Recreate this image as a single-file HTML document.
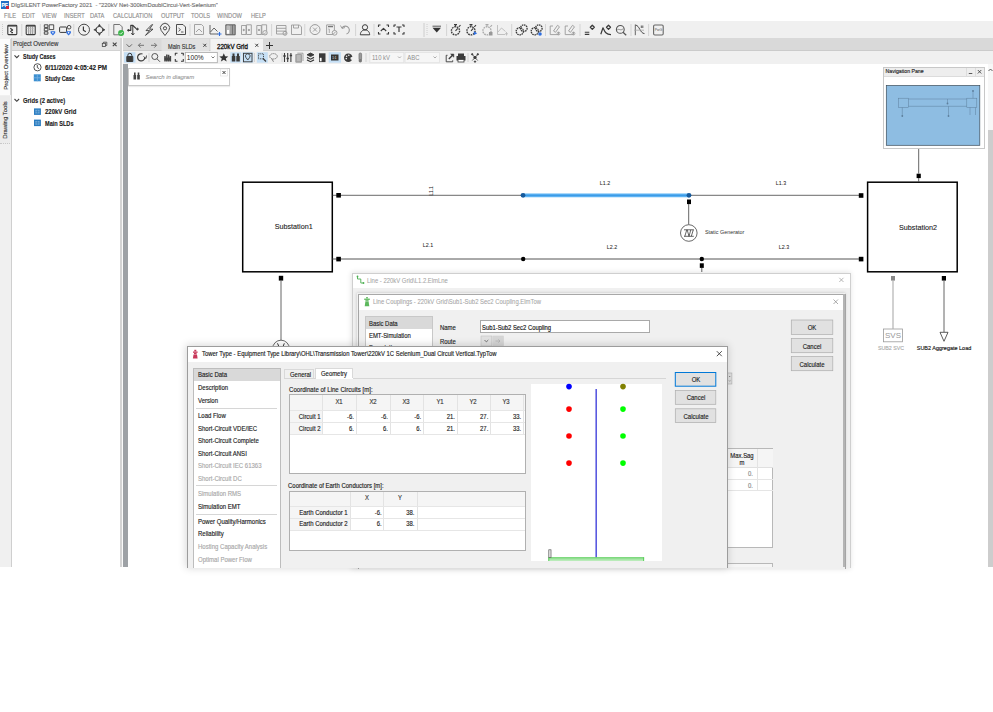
<!DOCTYPE html>
<html><head><meta charset="utf-8">
<style>
html,body{margin:0;padding:0;background:#fff;}
body{width:993px;height:712px;position:relative;overflow:hidden;font-family:"Liberation Sans",sans-serif;color:#000;}
.a{position:absolute;}
.t{position:absolute;white-space:nowrap;font-family:"Liberation Sans",sans-serif;-webkit-text-stroke:0.14px currentColor;}
svg{position:absolute;overflow:visible;}
</style></head><body>

<!-- app frame -->
<div class="a" style="left:0;top:0;width:993px;height:567px;background:#fff;"></div>

<!-- title bar -->
<div class="a" style="left:1px;top:1px;width:8px;height:8px;background:#1f6fc5;"></div>
<div class="t" style="left:1.5px;top:1px;font-size:5px;line-height:8px;color:#fff;font-weight:bold;">PF</div>
<div class="a" style="left:6px;top:6px;width:3px;height:3px;background:#d0263a;"></div>
<div class="t" style="left:11px;top:0.8px;font-size:6.15px;line-height:8px;color:#707070;transform:scaleX(0.945);transform-origin:0 50%;">DIgSILENT PowerFactory 2021&nbsp; - "220kV Net-300kmDoublCircui-Vert-Selenium"</div>

<!-- menu -->
<div class="t" style="top:11.7px;font-size:7.1px;line-height:8px;color:#8e8e8e;left:0;-webkit-text-stroke:0;">
<span class="t" style="transform:scaleX(0.8);transform-origin:0 50%;left:4px">FILE</span>
<span class="t" style="transform:scaleX(0.8);transform-origin:0 50%;left:22px">EDIT</span>
<span class="t" style="transform:scaleX(0.8);transform-origin:0 50%;left:41.7px">VIEW</span>
<span class="t" style="transform:scaleX(0.8);transform-origin:0 50%;left:63.7px">INSERT</span>
<span class="t" style="transform:scaleX(0.8);transform-origin:0 50%;left:90.3px">DATA</span>
<span class="t" style="transform:scaleX(0.8);transform-origin:0 50%;left:113px">CALCULATION</span>
<span class="t" style="transform:scaleX(0.8);transform-origin:0 50%;left:160.5px">OUTPUT</span>
<span class="t" style="transform:scaleX(0.8);transform-origin:0 50%;left:191px">TOOLS</span>
<span class="t" style="transform:scaleX(0.8);transform-origin:0 50%;left:217.3px">WINDOW</span>
<span class="t" style="transform:scaleX(0.8);transform-origin:0 50%;left:250.8px">HELP</span>
</div>

<!-- main toolbar -->
<div class="a" style="left:0;top:21px;width:993px;height:17px;background:#f0f0f0;"></div>

<!-- main toolbar icons -->
<svg style="left:0;top:21px" width="993" height="17">
 <g fill="none" stroke="#3a3a3a" stroke-width="0.9" stroke-linejoin="round">
  <path d="M2.5 3 V15" stroke="#c8c8c8" stroke-dasharray="1 1"/>
  <!-- 1 terminal box -->
  <rect x="7.8" y="4.3" width="9" height="9.3" rx="0.8" stroke-width="1.1"/>
  <path d="M8 4.9 H16.6" stroke-width="1.3"/>
  <path d="M10.3 7.3 L12.6 9 L10.3 10.7 M11.2 11.6 h1.8" stroke-width="1.2"/>
  <path d="M21.8 3 V15" stroke="#d0d0d0"/>
  <!-- 2 table -->
  <rect x="26.2" y="4.3" width="9" height="9.3" rx="0.8" stroke-width="1.1"/>
  <path d="M26.4 4.9 H35" stroke-width="1.3"/>
  <path d="M28.7 5 V13 M30.7 5 V13 M32.7 5 V13" stroke="#777" stroke-width="0.8"/>
  <path d="M26.5 7.5 H35 M26.5 10 H35" stroke="#bbb" stroke-width="0.5"/>
  <path d="M40.3 3 V15" stroke="#d0d0d0"/>
  <!-- 3 four squares -->
  <rect x="44.3" y="3.8" width="3.6" height="2.6" stroke-width="0.9"/><rect x="44.3" y="7.3" width="3.6" height="2.6" stroke-width="0.9"/><rect x="44.3" y="10.8" width="3.6" height="2.4" stroke-width="0.9"/>
  <rect x="49.2" y="3.8" width="4.5" height="4.8" stroke-width="0.9"/>
  <!-- 4 -->
  <rect x="59.6" y="6" width="7" height="5.4" rx="0.6" stroke-width="1"/><circle cx="69.1" cy="6.2" r="1.8" stroke-width="0.9"/>
  <path d="M73.8 3 V15" stroke="#d0d0d0"/>
  <!-- 5 clock -->
  <circle cx="84" cy="8.7" r="5.5" stroke-width="1" stroke="#4a4a4a"/><path d="M83.4 5.6 V9.2 L85.8 10.8" stroke-width="1.2"/>
  <!-- 6 crosshair -->
  <circle cx="99.4" cy="8.8" r="3.4" stroke-width="1"/>
  <path d="M99.4 3.2 L98.3 5.2 H100.5 Z M99.4 14.4 L98.3 12.4 H100.5 Z M93.8 8.8 L95.8 7.7 V9.9 Z M105 8.8 L103 7.7 V9.9 Z" fill="#3a3a3a" stroke-width="0.6"/>
  <path d="M108.8 3 V15" stroke="#d0d0d0"/>
  <!-- 7 page check -->
  <path d="M113.8 3.5 H119.8 L122.2 5.9 V13.8 H113.8 Z" stroke="#666"/>
  <!-- 8 arrows -->
  <path d="M128.6 9.3 H130.8 V4.3 H132.6 L136.2 7.6" stroke-width="1.2"/>
  <path d="M132.8 4.5 V14 M131.3 12.2 L132.8 14 L134.3 12.2" stroke-width="1"/>
  <circle cx="137.4" cy="8.1" r="0.9" fill="#3a3a3a"/><circle cx="128.4" cy="9.3" r="0.8" fill="#3a3a3a"/>
  <!-- 9 lightning -->
  <path d="M151.8 3.6 L146 9.6 H149.6 L145.5 14.4 L153 8.2 H149.5 L152.6 3.6 Z" stroke-width="0.9"/>
  <!-- 10 pin -->
  <path d="M165 14.5 L161.2 9.5 A4.6 4.6 0 1 1 168.8 9.5 Z"/><circle cx="165" cy="7.3" r="1.6"/>
  <!-- 11 terminal page -->
  <path d="M176.5 3.5 H183 L185.5 6 V13.5 H176.5 Z"/><path d="M178.5 7 L180.5 8.7 L178.5 10.4 M181 11 h2.5" stroke-width="0.8"/>
  <path d="M190 3 V15" stroke="#d0d0d0"/>
 </g>
 <path d="M50.6 10.2 H55.2 V12 L52.9 14.4 L50.6 12 Z" fill="#2f6fe0"/><circle cx="52.9" cy="11.7" r="0.8" fill="#fff"/>
 <path d="M66.3 10.2 H70.9 V12 L68.6 14.4 L66.3 12 Z" fill="#2f6fe0"/><circle cx="68.6" cy="11.7" r="0.8" fill="#fff"/>
 <circle cx="121.1" cy="12.1" r="3" fill="#3bb54a"/><path d="M119.7 12.2 l1 1 l2 -2.2" stroke="#fff" stroke-width="0.8" fill="none"/>
 <g fill="none" stroke="#9a9a9a" stroke-width="0.9" stroke-linejoin="round">
  <!-- 13 gray page -->
  <path d="M194.5 3.5 H201.5 L203.5 5.5 V13.5 H194.5 Z"/><path d="M196 11 L199 8 L202 11" />
  <!-- 14 chart -->
  <path d="M210 4 V13 H218" stroke="#555"/><path d="M210.5 11 L214 7 L217.5 10.5" stroke="#555"/>
  <!-- 15 columns -->
  <rect x="225.8" y="3.8" width="9.4" height="10" fill="#a0a0a0" stroke="#555" stroke-width="0.9"/>
  <rect x="226.8" y="4.8" width="2.6" height="8" fill="#fff" stroke="none"/>
  <path d="M227 6 H229.2 M227 8 H229.2" stroke="#555" stroke-width="0.8"/>
  <path d="M232.5 4 V13.5" stroke="#666" stroke-width="0.8"/>
  <!-- 16 two panel -->
  <rect x="241.5" y="4.5" width="4.5" height="9"/><rect x="246.5" y="3.8" width="4.8" height="9.7"/>
  <circle cx="243.7" cy="9" r="0.7" fill="#888"/><circle cx="248.9" cy="9" r="0.7" fill="#888"/>
  <!-- 17 -->
  <rect x="256.8" y="4.5" width="4.5" height="9"/><rect x="261.8" y="3.8" width="4.8" height="9.7"/>
  <circle cx="259" cy="9" r="0.7" fill="#888"/><circle cx="265" cy="11.8" r="2.2" fill="#f0f0f0"/><path d="M264 11.9 l0.8 0.8 l1.3 -1.5" stroke-width="0.7"/>
  <path d="M271.6 3 V15" stroke="#d0d0d0"/>
  <!-- 19 database -->
  <path d="M276.5 4.5 H286 V13 H276.5 Z M276.5 7.3 H286 M276.5 10.1 H286"/><circle cx="285" cy="12.3" r="2"/>
  <!-- 20 save -->
  <path d="M291.5 4 H299.5 L301.5 6 V13.5 H291.5 Z M293.5 4 V7 H298.5 V4"/>
  <path d="M304.8 3 V15" stroke="#d0d0d0"/>
  <!-- 22 circle x -->
  <circle cx="315" cy="8.6" r="5" stroke-width="1"/><path d="M313 6.6 L317 10.6 M317 6.6 L313 10.6"/>
  <!-- 23 form -->
  <rect x="326.6" y="3.9" width="7.8" height="9.6"/><path d="M328 5.6 H333" stroke="#777" stroke-width="1.3"/><path d="M328.3 8 H329.3 V12" stroke-width="0.8"/>
  <circle cx="334.6" cy="11.8" r="2.4" fill="#f0f0f0"/><path d="M333.4 13 L335.8 10.6" stroke-width="0.9"/>
  <!-- 24 undo -->
  <path d="M342 7 A4 4 0 1 1 346.5 13" stroke-width="1.1"/><path d="M340.5 4.5 L342 7.5 L345 6.5"/>
  <path d="M355.6 3 V15" stroke="#d0d0d0"/>
 </g>
 <g fill="none" stroke="#3a3a3a" stroke-width="1" stroke-linejoin="round">
  <!-- 26 person -->
  <circle cx="365" cy="6.3" r="2.6"/><path d="M360.3 13.8 C360.5 10 363 9 365 9 C367 9 369.5 10 369.7 13.8 Z"/>
  <path d="M374 3 V15" stroke="#d0d0d0" stroke-width="0.9"/>
  <!-- 28 bracket ^ -->
  <path d="M378.5 6 V4 H380.5 M386.5 4 H388.5 V6 M378.5 11 V13 H380.5 M386.5 13 H388.5 V11" stroke-width="1.1"/>
  <path d="M380.8 10 L383.5 7.3 L386.2 10" stroke-width="1.1"/>
  <!-- 29 [T] -->
  <path d="M394 6 V4 H396 M402 4 H404 V6 M394 11 V13 H396 M402 13 H404 V11" stroke-width="1.1"/>
  <path d="M396.5 6 H401.5 M399 6 V11" stroke-width="1.2"/>
  <path d="M424 2 V16" stroke="#c8c8c8" stroke-width="0.9"/>
  <path d="M427 3 V15" stroke="#c8c8c8" stroke-dasharray="1 1" stroke-width="0.9"/>
 </g>
 <path d="M432.5 6.8 H441 L436.75 11.5 Z" fill="#333"/>
 <path d="M432.5 5.2 H441" stroke="#333" stroke-width="0.8"/>
 <g fill="none" stroke="#3a3a3a" stroke-width="1.1" stroke-linejoin="round">
  <path d="M446.6 3 V15" stroke="#d0d0d0" stroke-width="0.9"/>
  <circle cx="455.5" cy="9.8" r="4.1" stroke-dasharray="1.7 0.8" stroke-width="1.4"/><path d="M454 3.6 H457 M455.5 3.6 V5.5 M458.8 5.8 L460.5 4.2 M455.5 9.8 L457.8 7.3" stroke-width="1.1"/>
  <circle cx="471" cy="9.8" r="4.1" stroke-dasharray="1.7 0.8" stroke-width="1.4"/><path d="M469.5 3.6 H472.5 M471 3.6 V5.5 M474.3 5.8 L476 4.2 M471 9.8 L473.3 7.3" stroke-width="1.1"/>
  <circle cx="487" cy="9.8" r="4.1" stroke="#aaa" stroke-dasharray="1.7 0.8" stroke-width="1.4"/><path d="M485.5 3.6 H488.5 M487 3.6 V5.5 M490.3 5.8 L492 4.2" stroke="#aaa" stroke-width="1.1"/>
  <path d="M497.5 4 V13.5 H505 M498 11 L501.5 7 L505.5 10.5 M506.5 11 V14.5 M505 12.8 H508" stroke="#bbb" stroke-width="0.9"/>
  <path d="M511.7 3 V15" stroke="#d0d0d0" stroke-width="0.9"/>
  <circle cx="519.8" cy="10.3" r="3.6" stroke-dasharray="1.5 0.7" stroke-width="1.3"/><circle cx="523.8" cy="7.2" r="3.3" stroke-dasharray="1.5 0.7" stroke-width="1.3"/>
  <circle cx="534.8" cy="10.3" r="3.6" stroke-dasharray="1.5 0.7" stroke-width="1.3"/><circle cx="538.8" cy="7.2" r="3.3" stroke-dasharray="1.5 0.7" stroke-width="1.3"/>
  <path d="M545.5 3 V15" stroke="#d0d0d0" stroke-width="0.9"/>
  <path d="M553 5 H550.2 V13.6 H558.5 V11" stroke="#9a9a9a" stroke-width="0.9"/><path d="M553.5 10 L557.5 4.3 L559.5 5.8 L555.5 11.3 Z" stroke="#9a9a9a" stroke-width="0.9"/><circle cx="558.5" cy="12.5" r="1.4" stroke="#9a9a9a" stroke-width="0.8"/>
  <path d="M568 5 H565.2 V13.6 H573.5 V11" stroke="#9a9a9a" stroke-width="0.9"/><path d="M568.5 10 L572.5 4.3 L574.5 5.8 L570.5 11.3 Z" stroke="#9a9a9a" stroke-width="0.9"/><circle cx="573.5" cy="12.5" r="1.4" stroke="#9a9a9a" stroke-width="0.8"/>
  <path d="M580 3 V15" stroke="#d0d0d0" stroke-width="0.9"/>
  <path d="M584.8 11.3 H589.3 M584.8 13.4 H589.3" stroke-width="1.1"/>
  <path d="M592.3 4.3 L594.3 6.3 L592.3 8.3 L590.3 6.3 Z" stroke-width="1.3"/>
  <path d="M600.8 13.2 L603 6.8 C604.5 10 605.5 13.6 611 13.6" stroke-width="1.2"/><path d="M608.5 4.3 L610.5 6.3 L608.5 8.3 L606.5 6.3 Z" stroke-width="1.3"/>
  <circle cx="620.3" cy="8.4" r="3.9" stroke="#555"/><path d="M623 11.2 L626.2 14.3" stroke="#555" stroke-width="1.2"/><path d="M617 9.3 C618.5 6.8 620.5 10.5 623.3 7.6" stroke-width="0.7" stroke="#666"/>
  <path d="M631 3 V15" stroke="#d0d0d0" stroke-width="0.9"/>
  <path d="M635.3 14.2 V3.5" stroke="#666" stroke-width="1"/><path d="M635.6 4.2 C639.5 4.2 640 12.5 644.5 12.6" stroke-width="0.9"/><path d="M634 9.2 H644" stroke="#aaa" stroke-width="0.8"/>
  <path d="M641.3 7 V4.5 M642.8 7 V4.5" stroke-width="0.8"/>
  <path d="M648.6 3 V15" stroke="#d0d0d0" stroke-width="0.9"/>
  <rect x="653.6" y="4" width="9.6" height="10" rx="1.2" stroke="#666" stroke-width="1.1"/>
 </g>
 <path d="M473.8 10.3 L477.2 12.3 L473.8 14.3 Z" fill="#2f6fe0"/>
 <rect x="489" y="11" width="3.5" height="3.5" fill="#999"/>
 <circle cx="540" cy="13" r="1.8" fill="#2f6fe0"/>
 <path d="M219.5 11 V15 M217.5 13 H221.5" stroke="#2f6fe0" stroke-width="1.1"/>
 <text x="654.8" y="10.3" font-size="3.4" font-family="Liberation Sans" fill="#555">PwG</text>
</svg>


<!-- left vertical tabs -->
<div class="a" style="left:0;top:38px;width:11px;height:529px;background:#f0f0f0;"></div>
<div class="a" style="left:0;top:39px;width:10px;height:56px;background:#fcfcfc;border-right:1px solid #d8d8d8;"></div>
<div class="a" style="left:0;top:96px;width:10px;height:47px;background:#ececec;border-bottom:1px dotted #c8c8c8;"></div>
<div class="t" style="left:5.5px;top:67px;font-size:6px;line-height:7px;color:#333;transform:translate(-50%,-50%) rotate(-90deg);">Project Overview</div>
<div class="t" style="left:5.3px;top:120.2px;font-size:6px;line-height:7px;color:#333;transform:translate(-50%,-50%) rotate(-90deg);">Drawing Tools</div>

<!-- project overview panel -->
<div class="a" style="left:11px;top:38px;width:1px;height:529px;background:#cfcfcf;"></div>
<div class="a" style="left:12px;top:38px;width:108px;height:12px;background:#e3e3e3;border-bottom:1px solid #d2d2d2;"></div>
<div class="t" style="left:13.4px;top:39.3px;font-size:6.6px;line-height:10px;color:#333;transform:scaleX(0.91);transform-origin:0 50%;">Project Overview</div>
<div class="a" style="left:12px;top:51px;width:108px;height:516px;background:#fff;"></div>
<div class="a" style="left:120px;top:38px;width:3px;height:529px;background:#fafafa;"></div><div class="a" style="left:120px;top:38px;width:2px;height:529px;background:#d4d4d4;"></div>


<!-- tree -->
<svg style="left:0;top:0" width="993" height="200">
 <g fill="none" stroke="#404040" stroke-width="0.9">
  <path d="M14.5 55.3 L16.8 57.6 L19.1 55.3" stroke-width="1.1"/>
  <path d="M14.5 99 L16.8 101.3 L19.1 99" stroke-width="1.1"/>
  <circle cx="37.5" cy="67.3" r="3.6"/>
  <path d="M37.3 65 V67.6 L39 68.6"/>
 </g>
 <g>
  <rect x="33.8" y="74.3" width="7" height="7" fill="#3b8fd0"/>
  <rect x="34" y="108.4" width="6.9" height="6.5" fill="#2a7cc0"/>
  <rect x="34" y="119.6" width="6.9" height="6.5" fill="#2a7cc0"/>
  <path d="M35.3 109.8 h4.3 v3.8 h-4.3 z M35.3 121 h4.3 v3.8 h-4.3 z" fill="#6fa8d8"/>
  <path d="M37.45 109.8 v3.8 M35.3 111.7 h4.3 M37.45 121 v3.8 M35.3 122.9 h4.3" stroke="#2a7cc0" stroke-width="0.6"/>
  <path d="M37.3 74.3 v7 M33.8 77.8 h7" stroke="#7ab3e2" stroke-width="0.8"/>
 </g>
</svg>
<div class="t" style="left:23.2px;top:52.1px;font-size:6.8px;line-height:9px;font-weight:bold;color:#1a1a1a;-webkit-text-stroke:0.12px #1a1a1a;transform:scaleX(0.80);transform-origin:0 50%;">Study Cases</div>
<div class="t" style="left:44.5px;top:62.9px;font-size:6.8px;line-height:9px;font-weight:bold;color:#1a1a1a;-webkit-text-stroke:0.12px #1a1a1a;transform:scaleX(0.923);transform-origin:0 50%;">6/11/2020 4:05:42 PM</div>
<div class="t" style="left:44.5px;top:73.6px;font-size:6.8px;line-height:9px;font-weight:bold;color:#1a1a1a;-webkit-text-stroke:0.12px #1a1a1a;transform:scaleX(0.807);transform-origin:0 50%;">Study Case</div>
<div class="t" style="left:23.2px;top:96.3px;font-size:6.8px;line-height:9px;font-weight:bold;color:#1a1a1a;-webkit-text-stroke:0.12px #1a1a1a;transform:scaleX(0.857);transform-origin:0 50%;">Grids (2 active)</div>
<div class="t" style="left:44.5px;top:107.2px;font-size:6.8px;line-height:9px;font-weight:bold;color:#1a1a1a;-webkit-text-stroke:0.12px #1a1a1a;transform:scaleX(0.881);transform-origin:0 50%;">220kV Grid</div>
<div class="t" style="left:44.5px;top:118.5px;font-size:6.8px;line-height:9px;font-weight:bold;color:#1a1a1a;-webkit-text-stroke:0.12px #1a1a1a;transform:scaleX(0.82);transform-origin:0 50%;">Main SLDs</div>
<!-- header icons -->
<svg style="left:0;top:0" width="130" height="60">
 <g fill="none" stroke="#444" stroke-width="0.9">
  <rect x="102.3" y="43.3" width="3.2" height="3.2" stroke-width="0.8"/>
  <path d="M103.5 43 v-0.8 h3.3 v3.3 h-1" stroke-width="0.8"/>
  <path d="M112.8 42.6 L116.6 46.2 M116.6 42.6 L112.8 46.2" stroke-width="1.1"/>
 </g>
</svg>


<!-- tab bar -->
<div class="a" style="left:123px;top:37.7px;width:870px;height:13px;background:#d9d9d9;border-bottom:1px solid #cbcbcb;box-sizing:border-box;"></div>

<!-- tabs -->
<svg style="left:0;top:0" width="300" height="60">
 <g fill="none" stroke="#666" stroke-width="0.9">
  <path d="M126.6 44.3 L129.3 47 L132 44.3" stroke-width="1"/>
  <path d="M144 45.3 H138.5 M140.7 43 L138.4 45.3 L140.7 47.6"/>
  <path d="M151 45.3 H156.5 M154.3 43 L156.6 45.3 L154.3 47.6"/>
 </g>
 <rect x="161.5" y="39" width="47.5" height="12" fill="#e1e1e1"/>
 <rect x="210.5" y="39" width="52.5" height="12" fill="#f3f3f3"/>
 <g fill="none" stroke="#333" stroke-width="0.9">
  <path d="M203.3 43.8 L206.3 46.8 M206.3 43.8 L203.3 46.8"/>
  <path d="M255.3 43.8 L258.3 46.8 M258.3 43.8 L255.3 46.8"/>
  <path d="M269.5 42 V49 M266 45.5 H273" stroke-width="1"/>
 </g>
</svg>
<div class="t" style="left:168.4px;top:41.6px;font-size:6.5px;line-height:9px;color:#333;transform:scaleX(0.86);transform-origin:0 50%;">Main SLDs</div>
<div class="t" style="left:216.8px;top:41.6px;font-size:6.5px;line-height:9px;font-weight:normal;-webkit-text-stroke:0.3px #111;color:#111;transform:scaleX(0.95);transform-origin:0 50%;">220kV Grid</div>


<!-- diagram toolbar -->
<div class="a" style="left:123px;top:51px;width:870px;height:13.4px;background:#f0f0f0;"></div>

<!-- diagram toolbar -->
<svg style="left:0;top:51px" width="993" height="13">
 <rect x="124" y="1.2" width="11.5" height="10.5" fill="#c5dff5"/>
 <rect x="230.3" y="1.2" width="11" height="10.5" fill="#c5dff5"/>
 <rect x="242.3" y="1.2" width="11" height="10.5" fill="#c5dff5"/>
 <rect x="256.8" y="1.2" width="11" height="10.5" fill="#c5dff5"/>
 <rect x="328.7" y="1.2" width="12.3" height="10.5" fill="#c5dff5"/>
 <g fill="none" stroke="#3a3a3a" stroke-width="1" stroke-linejoin="round">
  <!-- lock -->
  <path d="M127.8 5.5 V4.3 A2 2 0 0 1 131.8 4.3 V5.5"/>
  <rect x="126.8" y="5.5" width="6" height="5" fill="#3a3a3a"/>
  <!-- refresh -->
  <path d="M144.8 6.5 A3.6 3.6 0 1 1 142.5 3" stroke-width="1.2"/><path d="M143.5 5.5 L146 7.5 L146.5 4.5" stroke-width="0.9"/>
  <path d="M149 2 V11" stroke="#d0d0d0" stroke-width="0.9"/>
  <!-- magnifier -->
  <circle cx="154.8" cy="5.5" r="3" stroke="#555"/><path d="M157 7.8 L160 10.8" stroke="#555"/>
  <!-- hand -->
  <path d="M165 10.5 V5 M166.8 10.5 V3.5 M168.6 10.5 V3.8 M170.4 10.5 V5" stroke-width="1.5" stroke="#444"/>
  <path d="M164.5 8 H171" stroke-width="3" stroke="#444"/>
  <!-- fullscreen -->
  <path d="M175.3 4.5 V2.3 H177.5 M181 2.3 H183.3 V4.5 M175.3 8 V10.3 H177.5 M181 10.3 H183.3 V8" stroke-width="1.1"/>
 </g>
 <rect x="185.3" y="1.5" width="32" height="10.2" fill="#fff" stroke="#a8a8a8" stroke-width="0.8"/>
 <path d="M211.5 5.5 L213 7 L214.5 5.5" fill="none" stroke="#555" stroke-width="0.8"/>
 <text x="186.8" y="9.3" font-size="6.6" font-family="Liberation Sans" fill="#222">100%</text>
 <path d="M223.8 2.2 L225.1 5.3 L228.3 5.4 L225.8 7.4 L226.7 10.5 L223.8 8.7 L220.9 10.5 L221.8 7.4 L219.3 5.4 L222.5 5.3 Z" fill="#333"/>
 <g fill="#3a3a3a">
  <!-- binoculars -->
  <rect x="231.8" y="5" width="3.5" height="5.5"/><rect x="236.3" y="5" width="3.5" height="5.5"/>
  <rect x="232.5" y="2.5" width="2" height="3"/><rect x="237" y="2.5" width="2" height="3"/>
 </g>
 <g fill="none" stroke="#3a3a3a" stroke-width="0.9">
  <rect x="243.5" y="2.3" width="8.5" height="8.5"/>
  <path d="M247.75 9 L245.8 6.3 A2.3 2.3 0 1 1 249.7 6.3 Z"/>
  <path d="M254.5 2 V11" stroke="#d0d0d0"/>
  <rect x="258.5" y="2.8" width="5" height="5" stroke-dasharray="1 0.8"/><path d="M263 7.5 L266 10.5" stroke-width="1.3"/>
  <ellipse cx="273.5" cy="5.3" rx="3.8" ry="2.7" stroke="#777" stroke-dasharray="1.5 0.5"/><path d="M271.8 7.8 L273.5 10.8" stroke="#777"/>
  <path d="M282 2 V11" stroke="#d0d0d0"/>
  <path d="M284.5 2 V11 M287.7 2 V11 M290.9 2 V11" stroke-width="1.1"/>
  <path d="M283.3 5 H285.7 M286.5 7.5 H288.9 M289.7 4.5 H292.1" stroke-width="1.3"/>
  <path d="M295.8 3.5 H301.5 V11.2 H295.8 Z" fill="#aaa" stroke="#999"/><path d="M297.3 2.2 H303 V10" stroke="#999"/><path d="M297 5 H300.5 M297 7 H300.5 M297 9 H300.5" stroke="#ddd" stroke-width="0.6"/>
  <path d="M307 3.8 L310.5 2 L314 3.8 L310.5 5.6 Z" fill="#3a3a3a"/><path d="M307 6.4 L310.5 8.2 L314 6.4 M307 8.9 L310.5 10.7 L314 8.9" stroke-width="1.2"/>
 </g>
 <rect x="319" y="2.3" width="6.5" height="8.8" fill="#3a3a3a"/>
 <rect x="319.8" y="6.8" width="1.8" height="3.5" fill="#fff"/>
 <rect x="331" y="3.5" width="7.5" height="6" fill="#333"/>
 <text x="332.3" y="8" font-size="3" font-family="Liberation Sans" fill="#fff">1:1</text>
 <circle cx="348.3" cy="6.7" r="4.3" fill="#3a3a3a"/>
 <circle cx="346.6" cy="5.3" r="0.8" fill="#f0f0f0"/><circle cx="348.8" cy="4.3" r="0.8" fill="#f0f0f0"/><circle cx="346.3" cy="7.6" r="0.8" fill="#f0f0f0"/><path d="M350.5 6.5 L353 5.5 L353 9.5 L350.5 8.3 Z" fill="#f0f0f0"/>
 <rect x="359" y="2" width="2.6" height="7.2" rx="1.2" fill="#999" stroke="#777" stroke-width="0.8"/><circle cx="360.3" cy="9.7" r="1.7" fill="#777"/>
 <path d="M366 2 V11" stroke="#d0d0d0" stroke-width="0.9"/>
 <rect x="369.8" y="1.5" width="34" height="10.2" fill="#f6f6f6" stroke="#e2e2e2" stroke-width="0.8"/>
 <text x="372" y="9.2" font-size="6.6" font-family="Liberation Sans" fill="#8e8e8e" transform="translate(372 0) scale(0.9 1) translate(-372 0)">110 kV</text>
 <path d="M398 5.5 L399.5 7 L401 5.5" fill="none" stroke="#999" stroke-width="0.8"/>
 <rect x="405" y="1.5" width="34.5" height="10.2" fill="#f6f6f6" stroke="#e2e2e2" stroke-width="0.8"/>
 <text x="407.3" y="9.2" font-size="6.6" font-family="Liberation Sans" fill="#8e8e8e" transform="translate(407 0) scale(0.9 1) translate(-407 0)">ABC</text>
 <path d="M433.5 5.5 L435 7 L436.5 5.5" fill="none" stroke="#999" stroke-width="0.8"/>
 <g fill="none" stroke="#3a3a3a" stroke-width="1">
  <path d="M447.5 4.3 H446.2 V10.8 H452.7 V9.3" stroke-width="0.9"/><path d="M448.8 8 L452.5 4.3" stroke-width="1.3"/><path d="M450.6 3 H453.8 V6.2 Z" fill="#3a3a3a" stroke-width="0.5"/>
 </g>
 <rect x="456.5" y="5" width="9" height="4.5" fill="#3a3a3a"/><rect x="458" y="2.5" width="6" height="2.5" fill="#3a3a3a"/><rect x="458" y="8.5" width="6" height="2.5" fill="#fff" stroke="#3a3a3a" stroke-width="0.8"/>
 <path d="M468 2 V11" stroke="#d0d0d0" stroke-width="0.9"/>
 <g stroke="#3a3a3a" stroke-width="0.9" fill="#3a3a3a">
  <path d="M475 6.5 L472.3 3.5 M475 6.5 L477.7 3.5 M475 6.5 L472.3 9.5 M475 6.5 L477.7 9.5" stroke-width="0.8"/>
  <circle cx="475" cy="6.5" r="1.2"/><circle cx="472.2" cy="3.3" r="0.7"/><circle cx="477.8" cy="3.3" r="0.7"/><circle cx="475" cy="10.6" r="0.7"/>
 </g>
</svg>
<!-- search box -->
<div class="a" style="left:128px;top:68px;width:100px;height:15.5px;background:#fff;border:1px solid #c9c9c9;box-shadow:0 1px 1px rgba(0,0,0,0.08);"></div>
<svg style="left:0;top:0" width="260" height="100">
 <g fill="#444"><rect x="133.5" y="75" width="2.6" height="4.5"/><rect x="137.2" y="75" width="2.6" height="4.5"/><rect x="134" y="72.5" width="1.6" height="3"/><rect x="137.7" y="72.5" width="1.6" height="3"/></g>
 <rect x="220.5" y="69" width="7" height="7" fill="#fff" stroke="#ddd" stroke-width="0.6"/>
 <path d="M222.5 71 L225.5 74 M225.5 71 L222.5 74" stroke="#333" stroke-width="0.9"/>
</svg>
<div class="t" style="left:145.5px;top:72.8px;font-size:6px;line-height:9px;color:#a0a0a0;font-style:italic;">Search in diagram</div>


<!-- canvas -->
<div class="a" style="left:123px;top:64px;width:5px;height:503px;background:#9ea2a6;"></div>
<div class="a" style="left:988px;top:64px;width:5px;height:503px;background:#f7f7f7;"></div>
<div class="a" style="left:988px;top:130px;width:5px;height:437px;background:#cdcdcd;"></div>


<!-- diagram -->
<svg style="left:0;top:0" width="993" height="567">
 <g stroke="#000" fill="none">
  <rect x="242.7" y="182.2" width="89.6" height="89.6" stroke-width="1.5"/>
  <rect x="867.6" y="182.2" width="89.6" height="89.6" stroke-width="1.5"/>
 </g>
 <!-- top line -->
 <path d="M332.5 195.3 H523 M689 195.3 H860" stroke="#444" stroke-width="0.8"/>
 <path d="M523 195.3 H689" stroke="#5db3f3" stroke-width="3.8"/>
 <path d="M523 195.3 H689" stroke="#3d9be6" stroke-width="1.2"/>
 <circle cx="523" cy="195.3" r="2.4" fill="#165a9c"/>
 <circle cx="689" cy="195.3" r="2.4" fill="#165a9c"/>
 <!-- bottom line -->
 <path d="M332.5 259 H860" stroke="#555" stroke-width="1"/>
 <circle cx="523.2" cy="259" r="2.2" fill="#000"/>
 <circle cx="701.8" cy="259" r="2.2" fill="#000"/>
 <!-- nodes -->
 <g fill="#000">
  <rect x="336.3" y="193" width="4.6" height="4.6"/>
  <rect x="336.3" y="256.8" width="4.6" height="4.6"/>
  <rect x="858.8" y="193.2" width="4.6" height="4.6"/>
  <rect x="858.8" y="256.8" width="4.6" height="4.6"/>
  <rect x="687" y="199.5" width="4" height="4.6"/>
  <rect x="699.8" y="263.3" width="4" height="4.6"/>
  <rect x="278.8" y="275.8" width="4.4" height="4.8"/>
  <rect x="916.6" y="173.7" width="4.2" height="4.4"/>
  <rect x="941.8" y="276" width="4.2" height="4.6"/>
 </g>
 <rect x="891" y="276" width="4" height="4.6" fill="#888"/>
 <!-- stubs -->
 <path d="M688.7 204 V224.5 M918.7 148 V173.7 M918.7 178 V182 M281 280.6 V340.2 M701.8 268 V272 M944 280.6 V332" stroke="#555" stroke-width="0.9"/>
 <path d="M893 280.6 V328.8" stroke="#999" stroke-width="0.9"/>
 <!-- static gen -->
 <circle cx="688.8" cy="233" r="8.3" fill="#fff" stroke="#444" stroke-width="0.8"/>
 <path d="M684 229.8 H693.8 M684 236.3 H693.8 M686.8 229.8 L684.8 236.3 M687.2 229.8 L689 236.3 L690.8 229.8 M693.3 229.8 L691.3 236.3" stroke="#333" stroke-width="0.75" fill="none"/>
 <!-- motor circle -->
 <circle cx="281" cy="348.5" r="8.3" fill="#fff" stroke="#444" stroke-width="0.8"/>
 <path d="M277.5 343.3 L279.5 348 M284.3 343.3 L282.5 348" stroke="#222" stroke-width="0.9" fill="none"/>
 <!-- SVS -->
 <rect x="883.5" y="329" width="19" height="12.8" fill="#fff" stroke="#999" stroke-width="0.8"/>
 <text x="893" y="338.3" font-size="8" font-family="Liberation Sans" fill="#999" text-anchor="middle">SVS</text>
 <!-- load -->
 <path d="M940 332.3 H948 L944 341.3 Z" fill="#fff" stroke="#333" stroke-width="0.8"/>
</svg>
<div class="t" style="left:293.7px;top:226.3px;font-size:7.2px;line-height:9px;color:#222;-webkit-text-stroke:0.1px #222;transform:translate(-50%,-50%);">Substation1</div>
<div class="t" style="left:918px;top:226.6px;font-size:7.2px;line-height:9px;color:#222;-webkit-text-stroke:0.1px #222;transform:translate(-50%,-50%);">Substation2</div>
<div class="t" style="left:430.8px;top:190.8px;font-size:5.5px;line-height:7px;color:#222;-webkit-text-stroke:0.05px #222;transform:translate(-50%,-50%) rotate(-90deg) scaleX(0.9);">L1.1</div>
<div class="t" style="left:605.4px;top:182.7px;font-size:5.9px;line-height:7px;color:#222;-webkit-text-stroke:0.05px #222;transform:translate(-50%,-50%) scaleX(0.9);">L1.2</div>
<div class="t" style="left:781px;top:182.5px;font-size:5.9px;line-height:7px;color:#222;-webkit-text-stroke:0.05px #222;transform:translate(-50%,-50%) scaleX(0.9);">L1.3</div>
<div class="t" style="left:427.7px;top:245.2px;font-size:5.9px;line-height:7px;color:#222;-webkit-text-stroke:0.05px #222;transform:translate(-50%,-50%) scaleX(0.9);">L2.1</div>
<div class="t" style="left:612px;top:247px;font-size:5.9px;line-height:7px;color:#222;-webkit-text-stroke:0.05px #222;transform:translate(-50%,-50%) scaleX(0.9);">L2.2</div>
<div class="t" style="left:784.3px;top:246.7px;font-size:5.9px;line-height:7px;color:#222;-webkit-text-stroke:0.05px #222;transform:translate(-50%,-50%) scaleX(0.9);">L2.3</div>
<div class="t" style="left:705px;top:228.5px;font-size:6px;line-height:7px;color:#333;-webkit-text-stroke:0;transform:scaleX(0.9);transform-origin:0 50%;">Static Generator</div>
<div class="t" style="left:891.4px;top:348.4px;font-size:5.9px;line-height:7px;color:#aaa;transform:translate(-50%,-50%) scaleX(0.9);">SUB2 SVC</div>
<div class="t" style="left:943.5px;top:348.4px;font-size:5.9px;line-height:7px;color:#111;transform:translate(-50%,-50%) scaleX(0.93);">SUB2 Aggregate Load</div>

<!-- navigation pane -->
<div class="a" style="left:883px;top:67px;width:100px;height:80px;background:#fff;border:1px solid #c8c8c8;"></div>
<div class="a" style="left:884px;top:68px;width:100px;height:7.5px;background:#eeeeee;border-bottom:1px solid #dcdcdc;"></div>
<div class="t" style="left:885.5px;top:68px;font-size:5.2px;line-height:7px;color:#222;">Navigation Pane</div>
<svg style="left:0;top:0" width="993" height="160">
 <path d="M966.5 68 V76 M975.5 68 V76" stroke="#d6d6d6" stroke-width="0.7"/>
 <path d="M968.8 73.5 H972.3" stroke="#333" stroke-width="0.8"/>
 <path d="M977.8 70 L981.3 73.5 M981.3 70 L977.8 73.5" stroke="#333" stroke-width="0.8"/>
 <rect x="886.3" y="85.5" width="93.5" height="59.8" fill="#8ebde2" stroke="#3a4a58" stroke-width="0.7"/>
 <g stroke="#5d7f9c" stroke-width="0.5" fill="none">
  <rect x="898.5" y="98.2" width="10" height="9.3"/>
  <rect x="966.8" y="98.2" width="10" height="9.3"/>
  <path d="M908.5 99 H966.8 M908.5 106.3 H966.8"/>
  <path d="M902.3 107.5 V116 M948.5 106.3 V116 M970 107.5 V115 M975.5 107.5 V115 M973 98.2 V92 M947.5 99 V103"/>
 </g>
 <g fill="#5d7f9c"><circle cx="902.3" cy="116" r="0.9"/><circle cx="948.5" cy="116" r="0.9"/><circle cx="973" cy="91" r="1"/><circle cx="947.5" cy="103.5" r="0.9"/></g>
 <!-- scrollbar arrow -->
 <path d="M988.5 71 L990.5 69 L992.5 71" stroke="#333" stroke-width="0.8" fill="none"/>
</svg>


<!-- ===== Line dialog (back) ===== -->
<div class="a" style="left:352px;top:272.5px;width:498px;height:295px;box-shadow:0 0 5px 1px rgba(0,0,0,0.1);"></div>
<div class="a" style="left:352px;top:272.5px;width:497px;height:294.5px;background:#f0f0f0;border:1px solid #cfcfcf;border-bottom:none;"></div>
<div class="a" style="left:353px;top:273.5px;width:497px;height:14.3px;background:#fff;"></div>
<svg style="left:0;top:0" width="993" height="567">
 <path d="M357.5 276.5 V279 H360.8 V283 H363.5" stroke="#4caf50" stroke-width="0.9" fill="none"/>
 <circle cx="357.5" cy="276.5" r="0.9" fill="#4caf50"/><circle cx="363.5" cy="283" r="0.9" fill="#4caf50"/>
 <path d="M839.3 277.8 L843.5 282 M843.5 277.8 L839.3 282" stroke="#999" stroke-width="0.7"/>
</svg>
<div class="t" style="transform:scaleX(0.93);transform-origin:0 50%;left:366.5px;top:277px;font-size:6.37px;line-height:8px;color:#a3a3a3;-webkit-text-stroke:0.05px #a3a3a3;">Line - 220kV Grid\L1.2.ElmLne</div>

<!-- ===== Line Couplings dialog ===== -->
<div class="a" style="left:357px;top:293px;width:488px;height:274px;box-shadow:0 0 3px rgba(0,0,0,0.2);"></div>
<div class="a" style="left:357.5px;top:293.5px;width:486px;height:273.5px;background:#f0f0f0;border:1px solid #a5a5a5;border-top:2px solid #a8a8a8;border-bottom:none;"></div>
<div class="a" style="left:358.5px;top:294.5px;width:486px;height:15.5px;background:#fff;"></div>
<svg style="left:0;top:0" width="993" height="567">
 <g fill="#5cb85c"><rect x="366.2" y="297" width="1.6" height="1.5"/><rect x="364.2" y="298.6" width="5.6" height="1.3"/><rect x="365.4" y="300.2" width="3.2" height="1.2"/><path d="M365.4 301.5 H368.6 L369.3 306.2 H364.7 Z"/></g>
 <path d="M833.5 299.5 L838 304 M838 299.5 L833.5 304" stroke="#888" stroke-width="0.7"/>
</svg>
<div class="t" style="transform:scaleX(0.93);transform-origin:0 50%;left:372.9px;top:298.3px;font-size:6.38px;line-height:8px;color:#a3a3a3;-webkit-text-stroke:0.05px #a3a3a3;">Line Couplings - 220kV Grid\Sub1-Sub2 Sec2 Coupling.ElmTow</div>
<!-- list -->
<div class="a" style="left:364.5px;top:315.5px;width:66.5px;height:251.5px;background:#fff;border:1px solid #c8c8c8;border-bottom:none;"></div>
<div class="a" style="left:365.5px;top:316.5px;width:66.5px;height:12.5px;background:#d9d9d9;"></div>
<div class="t" style="transform:scaleX(0.93);transform-origin:0 50%;left:369px;top:318.5px;font-size:6.37px;line-height:9px;color:#222;">Basic Data</div>
<div class="t" style="transform:scaleX(0.93);transform-origin:0 50%;left:369px;top:330.8px;font-size:6.37px;line-height:9px;color:#222;">EMT-Simulation</div>
<div class="t" style="transform:scaleX(0.93);transform-origin:0 50%;left:369px;top:343px;font-size:6.37px;line-height:9px;color:#222;">Description</div>
<div class="t" style="transform:scaleX(0.93);transform-origin:0 50%;left:440px;top:322.5px;font-size:6.37px;line-height:9px;color:#222;">Name</div>
<div class="t" style="transform:scaleX(0.93);transform-origin:0 50%;left:440px;top:337px;font-size:6.37px;line-height:9px;color:#222;">Route</div>
<div class="a" style="left:480px;top:320.3px;width:168px;height:10.6px;background:#fff;border:1px solid #a9a9a9;"></div>
<div class="t" style="transform:scaleX(0.93);transform-origin:0 50%;left:481.8px;top:322.5px;font-size:6.31px;line-height:9px;color:#111;">Sub1-Sub2 Sec2 Coupling</div>
<svg style="left:0;top:0" width="993" height="567">
 <rect x="481" y="336" width="10.8" height="10" fill="#e1e1e1" stroke="#c0c0c0" stroke-width="0.6"/>
 <rect x="492.8" y="336" width="10.5" height="10" fill="#d6d6d6" stroke="#cfcfcf" stroke-width="0.6"/>
 <path d="M484.5 340 L486.4 341.9 L488.3 340" stroke="#444" stroke-width="0.7" fill="none"/>
 <path d="M495.5 341 H500 M498.3 339.3 L500 341 L498.3 342.7" stroke="#aaa" stroke-width="0.6" fill="none"/>
 <!-- buttons -->
 <rect x="791.3" y="320" width="41.5" height="14.4" fill="#e1e1e1" stroke="#adadad" stroke-width="0.7"/>
 <rect x="791.3" y="338.4" width="41.5" height="14.3" fill="#e1e1e1" stroke="#adadad" stroke-width="0.7"/>
 <rect x="791.3" y="356.6" width="41.5" height="14.1" fill="#e1e1e1" stroke="#adadad" stroke-width="0.7"/>
 <rect x="727.4" y="373" width="4.5" height="11" fill="#e1e1e1" stroke="#adadad" stroke-width="0.6"/>
 <path d="M729 377 l0.7 -0.7 l0.7 0.7 M729 380.5 l0.7 0.7 l0.7 -0.7" stroke="#333" stroke-width="0.5" fill="none"/>
</svg>
<div class="t" style="left:812px;top:327.2px;font-size:6.48px;line-height:9px;color:#222;transform:translate(-50%,-50%) scaleX(0.93);">OK</div>
<div class="t" style="left:812px;top:345.6px;font-size:6.48px;line-height:9px;color:#222;transform:translate(-50%,-50%) scaleX(0.93);">Cancel</div>
<div class="t" style="left:812px;top:363.7px;font-size:6.48px;line-height:9px;color:#222;transform:translate(-50%,-50%) scaleX(0.93);">Calculate</div>
<!-- max sag table -->
<div class="a" style="left:700px;top:448.2px;width:73px;height:100px;background:#fff;border:1px solid #b8b8b8;box-sizing:border-box;"></div>
<div class="a" style="left:701px;top:449px;width:71.5px;height:18px;background:#f5f5f5;border-bottom:1px solid #e0e0e0;"></div>
<div class="a" style="left:756.5px;top:449px;width:1px;height:41.3px;background:#e3e3e3;"></div>
<div class="a" style="left:701px;top:478.8px;width:71.5px;height:1px;background:#e5e5e5;"></div>
<div class="a" style="left:701px;top:490.3px;width:71.5px;height:1px;background:#e5e5e5;"></div>
<div class="t" style="left:741.5px;top:451.5px;font-size:6.37px;line-height:7px;color:#222;transform:translateX(-50%) scaleX(0.93);text-align:center;">Max.Sag<br>m</div>
<div class="t" style="transform:scaleX(0.93);transform-origin:0 50%;left:748px;top:469px;font-size:6.37px;line-height:9px;color:#888;">0.</div>
<div class="t" style="transform:scaleX(0.93);transform-origin:0 50%;left:748px;top:480.5px;font-size:6.37px;line-height:9px;color:#888;">0.</div>
<div class="a" style="left:700px;top:563.4px;width:73px;height:4px;background:#f5f5f5;border:1px solid #b8b8b8;border-bottom:none;box-sizing:border-box;"></div>
<div class="a" style="left:843px;top:294px;width:2px;height:273px;background:#b4b4b4;"></div>

<!-- ===== Tower Type dialog (front) ===== -->
<div class="a" style="left:186.5px;top:346.3px;width:540.5px;height:221px;box-shadow:0 0 8px 1px rgba(0,0,0,0.16);"></div>
<div class="a" style="left:186.5px;top:346.3px;width:539.5px;height:220.7px;background:#f0f0f0;border:1px solid #9c9c9c;border-bottom:none;"></div>
<div class="a" style="left:187.5px;top:347.3px;width:539.5px;height:14.7px;background:#fff;"></div>
<svg style="left:0;top:0" width="993" height="567">
 <g fill="#c8385a"><rect x="194.3" y="349.8" width="2" height="1.6"/><rect x="193" y="351.5" width="4.6" height="1.3"/><rect x="194" y="353" width="2.6" height="1.3"/><path d="M193.5 354.5 H197 L197.6 358.5 H192.9 Z"/></g>
 <path d="M716.8 351.2 L721.8 356.2 M721.8 351.2 L716.8 356.2" stroke="#222" stroke-width="0.8"/>
</svg>
<div class="t" style="transform:scaleX(0.93);transform-origin:0 50%;left:202.4px;top:350.3px;font-size:6.34px;line-height:8px;color:#1a1a1a;">Tower Type - Equipment Type Library\OHL\Transmission Tower\220kV 1C Selenium_Dual Circuit Vertical.TypTow</div>
<!-- left list -->
<div class="a" style="left:193.3px;top:367.5px;width:85.5px;height:199.5px;background:#fff;border:1px solid #bdbdbd;border-bottom:none;"></div>
<div class="a" style="left:194.3px;top:368.5px;width:85.5px;height:12px;background:#d9d9d9;"></div>
<div class="t" style="transform:scaleX(0.93);transform-origin:0 50%;left:198.2px;top:370.1px;font-size:6.48px;line-height:9px;color:#222;">Basic Data</div>
<div class="t" style="transform:scaleX(0.93);transform-origin:0 50%;left:198.2px;top:382.9px;font-size:6.48px;line-height:9px;color:#222;">Description</div>
<div class="t" style="transform:scaleX(0.93);transform-origin:0 50%;left:198.2px;top:395.5px;font-size:6.48px;line-height:9px;color:#222;">Version</div>
<div class="a" style="left:195.7px;top:407.5px;width:81.6px;height:1px;background:#d6d6d6;"></div>
<div class="t" style="transform:scaleX(0.93);transform-origin:0 50%;left:198.2px;top:410.9px;font-size:6.48px;line-height:9px;color:#222;">Load Flow</div>
<div class="t" style="transform:scaleX(0.93);transform-origin:0 50%;left:198.2px;top:423.5px;font-size:6.48px;line-height:9px;color:#222;">Short-Circuit VDE/IEC</div>
<div class="t" style="transform:scaleX(0.93);transform-origin:0 50%;left:198.2px;top:436.2px;font-size:6.48px;line-height:9px;color:#222;">Short-Circuit Complete</div>
<div class="t" style="transform:scaleX(0.93);transform-origin:0 50%;left:198.2px;top:448.7px;font-size:6.48px;line-height:9px;color:#222;">Short-Circuit ANSI</div>
<div class="t" style="transform:scaleX(0.93);transform-origin:0 50%;left:198.2px;top:461.1px;font-size:6.48px;line-height:9px;color:#a8a8a8;">Short-Circuit IEC 61363</div>
<div class="t" style="transform:scaleX(0.93);transform-origin:0 50%;left:198.2px;top:473.6px;font-size:6.48px;line-height:9px;color:#a8a8a8;">Short-Circuit DC</div>
<div class="a" style="left:195.7px;top:485.2px;width:81.6px;height:1px;background:#d6d6d6;"></div>
<div class="t" style="transform:scaleX(0.93);transform-origin:0 50%;left:198.2px;top:489.1px;font-size:6.48px;line-height:9px;color:#a8a8a8;">Simulation RMS</div>
<div class="t" style="transform:scaleX(0.93);transform-origin:0 50%;left:198.2px;top:501.8px;font-size:6.48px;line-height:9px;color:#222;">Simulation EMT</div>
<div class="a" style="left:195.7px;top:514.0px;width:81.6px;height:1px;background:#d6d6d6;"></div>
<div class="t" style="transform:scaleX(0.93);transform-origin:0 50%;left:198.2px;top:516.7px;font-size:6.48px;line-height:9px;color:#222;">Power Quality/Harmonics</div>
<div class="t" style="transform:scaleX(0.93);transform-origin:0 50%;left:198.2px;top:529.3px;font-size:6.48px;line-height:9px;color:#222;">Reliability</div>
<div class="t" style="transform:scaleX(0.93);transform-origin:0 50%;left:198.2px;top:542.0px;font-size:6.48px;line-height:9px;color:#a8a8a8;">Hosting Capacity Analysis</div>
<div class="t" style="transform:scaleX(0.93);transform-origin:0 50%;left:198.2px;top:554.6px;font-size:6.48px;line-height:9px;color:#a8a8a8;">Optimal Power Flow</div>

<!-- tabs -->
<div class="a" style="left:284.2px;top:369px;width:30px;height:9.5px;background:#f0f0f0;border:1px solid #d9d9d9;border-bottom:none;box-sizing:border-box;"></div>
<div class="a" style="left:315px;top:367.8px;width:38px;height:11px;background:#fff;border:1px solid #d9d9d9;border-bottom:none;box-sizing:border-box;"></div>
<div class="a" style="left:284.2px;top:378.3px;width:382px;height:1px;background:#d6d6d6;"></div>
<div class="a" style="left:315.5px;top:378px;width:37px;height:1.3px;background:#fff;"></div>
<div class="t" style="transform:scaleX(0.93);transform-origin:0 50%;left:290px;top:369.5px;font-size:6.37px;line-height:9px;color:#222;">General</div>
<div class="t" style="transform:scaleX(0.93);transform-origin:0 50%;left:320.8px;top:368.7px;font-size:6.37px;line-height:9px;color:#222;">Geometry</div>
<div class="t" style="transform:scaleX(0.93);transform-origin:0 50%;left:288.5px;top:385.3px;font-size:6.56px;line-height:9px;color:#222;">Coordinate of Line Circuits [m]:</div>
<div class="a" style="left:288.5px;top:394.4px;width:237.3px;height:80px;background:#fff;border:1px solid #b0b0b0;box-sizing:border-box;"></div>
<div class="a" style="left:289.5px;top:395.4px;width:235.3px;height:15px;background:#f5f5f5;"></div>
<div class="a" style="left:289.5px;top:410.3px;width:33px;height:23.3px;background:#f5f5f5;"></div>
<div class="a" style="left:322.3px;top:395.4px;width:1px;height:38.2px;background:#e3e3e3;"></div>
<div class="a" style="left:356.0px;top:395.4px;width:1px;height:38.2px;background:#e3e3e3;"></div>
<div class="a" style="left:389.7px;top:395.4px;width:1px;height:38.2px;background:#e3e3e3;"></div>
<div class="a" style="left:422.7px;top:395.4px;width:1px;height:38.2px;background:#e3e3e3;"></div>
<div class="a" style="left:456.5px;top:395.4px;width:1px;height:38.2px;background:#e3e3e3;"></div>
<div class="a" style="left:489.6px;top:395.4px;width:1px;height:38.2px;background:#e3e3e3;"></div>
<div class="a" style="left:522.6px;top:395.4px;width:1px;height:38.2px;background:#e3e3e3;"></div>
<div class="a" style="left:289.5px;top:410.3px;width:235.3px;height:1px;background:#e6e6e6;"></div>
<div class="a" style="left:289.5px;top:422.4px;width:235.3px;height:1px;background:#e6e6e6;"></div>
<div class="a" style="left:289.5px;top:433.6px;width:235.3px;height:1px;background:#e6e6e6;"></div>
<div class="t" style="left:339.1px;top:400.6px;font-size:6.37px;line-height:9px;color:#333;transform:translate(-50%,-50%) scaleX(0.93);">X1</div>
<div class="t" style="left:372.9px;top:400.6px;font-size:6.37px;line-height:9px;color:#333;transform:translate(-50%,-50%) scaleX(0.93);">X2</div>
<div class="t" style="left:406.2px;top:400.6px;font-size:6.37px;line-height:9px;color:#333;transform:translate(-50%,-50%) scaleX(0.93);">X3</div>
<div class="t" style="left:439.6px;top:400.6px;font-size:6.37px;line-height:9px;color:#333;transform:translate(-50%,-50%) scaleX(0.93);">Y1</div>
<div class="t" style="left:473.1px;top:400.6px;font-size:6.37px;line-height:9px;color:#333;transform:translate(-50%,-50%) scaleX(0.93);">Y2</div>
<div class="t" style="left:506.1px;top:400.6px;font-size:6.37px;line-height:9px;color:#333;transform:translate(-50%,-50%) scaleX(0.93);">Y3</div>
<div class="t" style="transform:scaleX(0.93);transform-origin:100% 50%;left:289.5px;width:30.5px;text-align:right;top:411.9px;font-size:6.37px;line-height:9px;color:#222;">Circuit 1</div>
<div class="t" style="transform:scaleX(0.93);transform-origin:100% 50%;left:322.3px;width:31.9px;text-align:right;top:411.9px;font-size:6.37px;line-height:9px;color:#222;">-6.</div>
<div class="t" style="transform:scaleX(0.93);transform-origin:100% 50%;left:356.0px;width:31.9px;text-align:right;top:411.9px;font-size:6.37px;line-height:9px;color:#222;">-6.</div>
<div class="t" style="transform:scaleX(0.93);transform-origin:100% 50%;left:389.7px;width:31.2px;text-align:right;top:411.9px;font-size:6.37px;line-height:9px;color:#222;">-6.</div>
<div class="t" style="transform:scaleX(0.93);transform-origin:100% 50%;left:422.7px;width:32.0px;text-align:right;top:411.9px;font-size:6.37px;line-height:9px;color:#222;">21.</div>
<div class="t" style="transform:scaleX(0.93);transform-origin:100% 50%;left:456.5px;width:31.3px;text-align:right;top:411.9px;font-size:6.37px;line-height:9px;color:#222;">27.</div>
<div class="t" style="transform:scaleX(0.93);transform-origin:100% 50%;left:489.6px;width:31.2px;text-align:right;top:411.9px;font-size:6.37px;line-height:9px;color:#222;">33.</div>
<div class="t" style="transform:scaleX(0.93);transform-origin:100% 50%;left:289.5px;width:30.5px;text-align:right;top:423.5px;font-size:6.37px;line-height:9px;color:#222;">Circuit 2</div>
<div class="t" style="transform:scaleX(0.93);transform-origin:100% 50%;left:322.3px;width:31.9px;text-align:right;top:423.5px;font-size:6.37px;line-height:9px;color:#222;">6.</div>
<div class="t" style="transform:scaleX(0.93);transform-origin:100% 50%;left:356.0px;width:31.9px;text-align:right;top:423.5px;font-size:6.37px;line-height:9px;color:#222;">6.</div>
<div class="t" style="transform:scaleX(0.93);transform-origin:100% 50%;left:389.7px;width:31.2px;text-align:right;top:423.5px;font-size:6.37px;line-height:9px;color:#222;">6.</div>
<div class="t" style="transform:scaleX(0.93);transform-origin:100% 50%;left:422.7px;width:32.0px;text-align:right;top:423.5px;font-size:6.37px;line-height:9px;color:#222;">21.</div>
<div class="t" style="transform:scaleX(0.93);transform-origin:100% 50%;left:456.5px;width:31.3px;text-align:right;top:423.5px;font-size:6.37px;line-height:9px;color:#222;">27.</div>
<div class="t" style="transform:scaleX(0.93);transform-origin:100% 50%;left:489.6px;width:31.2px;text-align:right;top:423.5px;font-size:6.37px;line-height:9px;color:#222;">33.</div>
<div class="t" style="transform:scaleX(0.93);transform-origin:0 50%;left:288px;top:481px;font-size:6.43px;line-height:9px;color:#222;">Coordinate of Earth Conductors [m]:</div>
<div class="a" style="left:288.5px;top:490.6px;width:237.3px;height:60px;background:#fff;border:1px solid #b0b0b0;box-sizing:border-box;"></div>
<div class="a" style="left:289.5px;top:491.6px;width:235.3px;height:14.7px;background:#f5f5f5;"></div>
<div class="a" style="left:289.5px;top:506.3px;width:60.5px;height:23.3px;background:#f5f5f5;"></div>
<div class="a" style="left:350.0px;top:491.6px;width:1px;height:38px;background:#e3e3e3;"></div>
<div class="a" style="left:383.4px;top:491.6px;width:1px;height:38px;background:#e3e3e3;"></div>
<div class="a" style="left:416.6px;top:491.6px;width:1px;height:38px;background:#e3e3e3;"></div>
<div class="a" style="left:289.5px;top:506.3px;width:235.3px;height:1px;background:#e6e6e6;"></div>
<div class="a" style="left:289.5px;top:518.3px;width:235.3px;height:1px;background:#e6e6e6;"></div>
<div class="a" style="left:289.5px;top:529.6px;width:235.3px;height:1px;background:#e6e6e6;"></div>
<div class="t" style="left:366.7px;top:496.5px;font-size:6.37px;line-height:9px;color:#333;transform:translate(-50%,-50%) scaleX(0.93);">X</div>
<div class="t" style="left:400.0px;top:496.5px;font-size:6.37px;line-height:9px;color:#333;transform:translate(-50%,-50%) scaleX(0.93);">Y</div>
<div class="t" style="transform:scaleX(0.93);transform-origin:100% 50%;left:289.5px;width:57.7px;text-align:right;top:507.9px;font-size:6.43px;line-height:9px;color:#222;">Earth Conductor 1</div>
<div class="t" style="transform:scaleX(0.93);transform-origin:100% 50%;left:350.0px;width:31.6px;text-align:right;top:507.9px;font-size:6.37px;line-height:9px;color:#222;">-6.</div>
<div class="t" style="transform:scaleX(0.93);transform-origin:100% 50%;left:383.4px;width:31.4px;text-align:right;top:507.9px;font-size:6.37px;line-height:9px;color:#222;">38.</div>
<div class="t" style="transform:scaleX(0.93);transform-origin:100% 50%;left:289.5px;width:57.7px;text-align:right;top:519.4px;font-size:6.43px;line-height:9px;color:#222;">Earth Conductor 2</div>
<div class="t" style="transform:scaleX(0.93);transform-origin:100% 50%;left:350.0px;width:31.6px;text-align:right;top:519.4px;font-size:6.37px;line-height:9px;color:#222;">6.</div>
<div class="t" style="transform:scaleX(0.93);transform-origin:100% 50%;left:383.4px;width:31.4px;text-align:right;top:519.4px;font-size:6.37px;line-height:9px;color:#222;">38.</div>

<!-- drawing -->
<div class="a" style="left:530.5px;top:384.2px;width:131.5px;height:176.7px;background:#fff;"></div>
<svg style="left:0;top:0" width="993" height="567">
 <path d="M596.2 389 V557.5" stroke="#5a5ae0" stroke-width="1.6"/>
 <circle cx="569" cy="386.6" r="2.8" fill="#0000ff"/>
 <circle cx="623" cy="386.6" r="2.8" fill="#808000"/>
 <circle cx="569" cy="409.1" r="2.8" fill="#ff0000"/><circle cx="569" cy="436" r="2.8" fill="#ff0000"/><circle cx="569" cy="463.1" r="2.8" fill="#ff0000"/>
 <circle cx="623" cy="409.1" r="2.8" fill="#00ff00"/><circle cx="623" cy="436" r="2.8" fill="#00ff00"/><circle cx="623" cy="463.1" r="2.8" fill="#00ff00"/>
 <rect x="548.3" y="557.4" width="95.8" height="3.4" fill="#a8e6a8"/>
 <path d="M548.3 557.8 H644.1" stroke="#55cc55" stroke-width="0.9"/>
 <path d="M548.8 557.4 V561 M643.6 557.4 V561" stroke="#55cc55" stroke-width="0.9"/>
 <rect x="548.8" y="549.8" width="2.2" height="7.6" fill="#eee" stroke="#555" stroke-width="0.7"/>
 <!-- buttons -->
 <rect x="675.3" y="372.5" width="40.5" height="13.7" fill="#e1e1e1" stroke="#0078d7" stroke-width="1"/>
 <rect x="675.3" y="390.5" width="40.5" height="13.8" fill="#e1e1e1" stroke="#adadad" stroke-width="0.7"/>
 <rect x="675.3" y="408.8" width="40.5" height="13.8" fill="#e1e1e1" stroke="#adadad" stroke-width="0.7"/>
</svg>
<div class="t" style="left:695.5px;top:379.4px;font-size:6.48px;line-height:9px;color:#222;transform:translate(-50%,-50%) scaleX(0.93);">OK</div>
<div class="t" style="left:695.5px;top:397.4px;font-size:6.48px;line-height:9px;color:#222;transform:translate(-50%,-50%) scaleX(0.93);">Cancel</div>
<div class="t" style="left:695.5px;top:415.7px;font-size:6.48px;line-height:9px;color:#222;transform:translate(-50%,-50%) scaleX(0.93);">Calculate</div>


</body></html>
